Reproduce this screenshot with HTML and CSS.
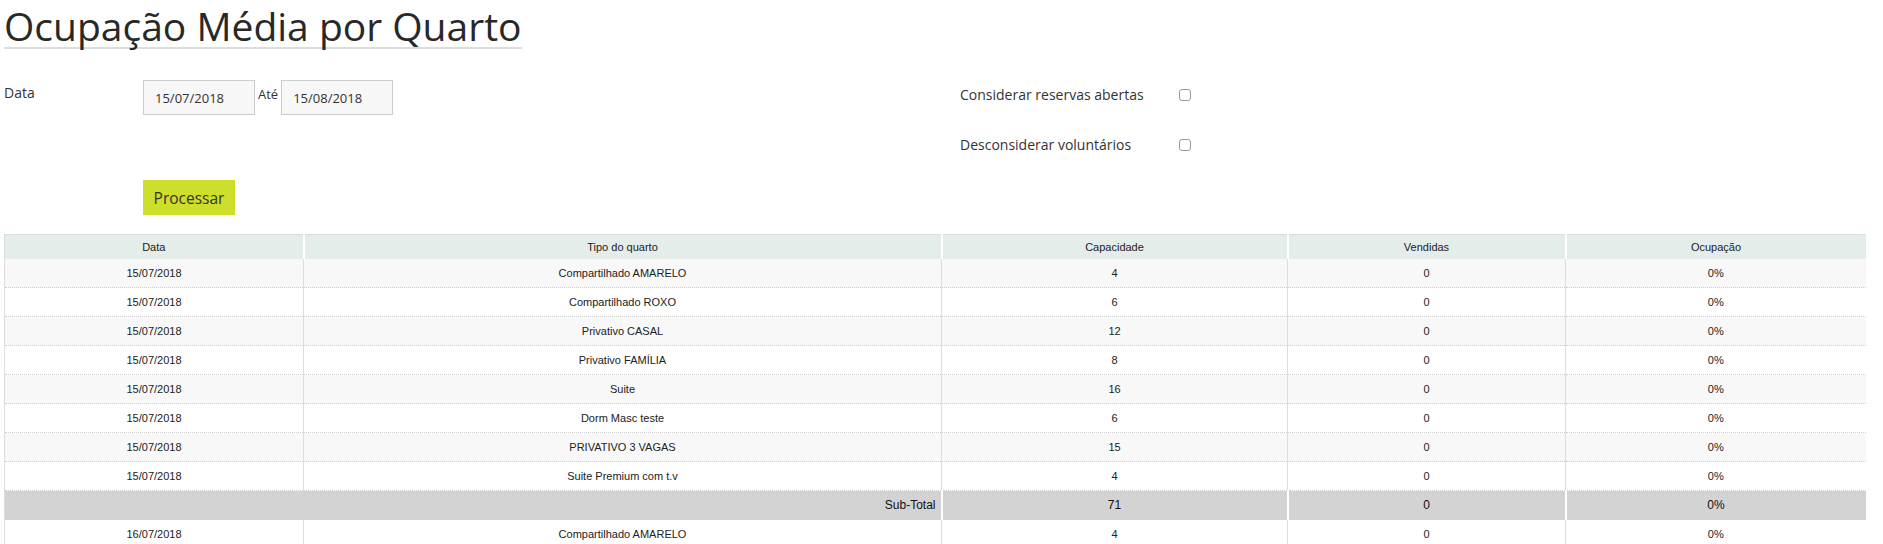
FILE: index.html
```html
<!DOCTYPE html>
<html lang="pt">
<head>
<meta charset="utf-8">
<title>Ocupação Média por Quarto</title>
<link rel="stylesheet" href="styles.css">
</head>
<body>
<div class="page">
  <h1 class="title">Ocupação Média por Quarto</h1>

  <form class="filters">
    <div class="filters-left">
      <div class="date-row">
        <label class="field-label">Data</label>
        <input class="date-input" type="text" value="15/07/2018">
        <span class="ate">Até</span>
        <input class="date-input" type="text" value="15/08/2018">
      </div>
      <div class="action-row">
        <button type="button" class="btn-process">Processar</button>
      </div>
    </div>
    <div class="filters-right">
      <div class="check-row">
        <label class="check-label">Considerar reservas abertas</label>
        <input class="check" type="checkbox">
      </div>
      <div class="check-row">
        <label class="check-label">Desconsiderar voluntários</label>
        <input class="check" type="checkbox">
      </div>
    </div>
  </form>

  <table class="report">
    <colgroup>
      <col class="c-data">
      <col class="c-tipo">
      <col class="c-cap">
      <col class="c-vend">
      <col class="c-ocup">
    </colgroup>
    <thead>
      <tr>
        <th>Data</th>
        <th>Tipo do quarto</th>
        <th>Capacidade</th>
        <th>Vendidas</th>
        <th>Ocupação</th>
      </tr>
    </thead>
    <tbody>
      <tr><td>15/07/2018</td><td>Compartilhado AMARELO</td><td>4</td><td>0</td><td>0%</td></tr>
      <tr><td>15/07/2018</td><td>Compartilhado ROXO</td><td>6</td><td>0</td><td>0%</td></tr>
      <tr><td>15/07/2018</td><td>Privativo CASAL</td><td>12</td><td>0</td><td>0%</td></tr>
      <tr><td>15/07/2018</td><td>Privativo FAMÍLIA</td><td>8</td><td>0</td><td>0%</td></tr>
      <tr><td>15/07/2018</td><td>Suite</td><td>16</td><td>0</td><td>0%</td></tr>
      <tr><td>15/07/2018</td><td>Dorm Masc teste</td><td>6</td><td>0</td><td>0%</td></tr>
      <tr><td>15/07/2018</td><td>PRIVATIVO 3 VAGAS</td><td>15</td><td>0</td><td>0%</td></tr>
      <tr><td>15/07/2018</td><td>Suite Premium com t.v</td><td>4</td><td>0</td><td>0%</td></tr>
      <tr class="subtotal"><td colspan="2" class="sub-label">Sub-Total</td><td>71</td><td>0</td><td>0%</td></tr>
      <tr><td>16/07/2018</td><td>Compartilhado AMARELO</td><td>4</td><td>0</td><td>0%</td></tr>
    </tbody>
  </table>
</div>
</body>
</html>
```

FILE: styles.css
```css
html, body {
  margin: 0;
  padding: 0;
  background: #fff;
}

body {
  font-family: "Open Sans", "Liberation Sans", sans-serif;
  color: #333;
}

.page {
  padding: 5px 18px 0 4px;
}

.title {
  display: inline-block;
  margin: 0;
  font-size: 39px;
  font-weight: 400;
  line-height: 42px;
  color: #282828;
  border-bottom: 2px solid #ddd;
}

.filters {
  display: flex;
  margin-top: 31px;
}

.filters-left {
  width: 956px;
}

.date-row {
  display: flex;
  align-items: flex-start;
}

.field-label {
  width: 139px;
  font-size: 14px;
  line-height: 18px;
  padding-top: 4px;
}

.date-input {
  box-sizing: border-box;
  width: 112px;
  height: 35px;
  margin: 0;
  padding: 0 0 0 11px;
  border: 1px solid #ccc;
  background: #f7f7f7;
  font-family: "Open Sans", sans-serif;
  font-size: 13px;
  color: #333;
  outline: none;
}

.ate {
  font-size: 13px;
  line-height: 18px;
  padding-top: 5px;
  margin: 0 3px 0 3px;
}

.action-row {
  margin-top: 65px;
  padding-left: 139px;
}

.btn-process {
  box-sizing: border-box;
  width: 92px;
  height: 35px;
  border: none;
  background: #cddf2a;
  color: #333;
  font-family: "Open Sans", sans-serif;
  font-size: 15.5px;
  padding: 0;
  cursor: pointer;
}

.filters-right {
  display: flex;
  flex-direction: column;
}

.check-row {
  display: flex;
  align-items: center;
  height: 50px;
  margin-top: -11px;
}

.check-row + .check-row {
  margin-top: 0;
}

.check-label {
  width: 219px;
  font-size: 14px;
}

.check {
  appearance: none;
  -webkit-appearance: none;
  box-sizing: border-box;
  width: 12px;
  height: 12px;
  margin: 2px 0 0 0;
  border: 1px solid #9a9a9a;
  border-radius: 3px;
  background: #fff;
}

.report {
  margin-top: 19px;
  width: 1861px;
  border-collapse: collapse;
  table-layout: fixed;
  font-family: "Liberation Sans", Arial, sans-serif;
  font-size: 11px;
  color: #222;
}

.c-data { width: 299px; }
.c-tipo { width: 638px; }
.c-cap { width: 346px; }
.c-vend { width: 278px; }
.c-ocup { width: 300px; }

.report th {
  height: 24px;
  padding: 0;
  background: #e5edeb;
  font-weight: 400;
  color: #222;
  border-top: 1px solid #dcdcdc;
  border-left: 2px solid #fff;
  text-align: center;
}

.report th:first-child {
  border-left: 1px solid #dcdcdc;
}

.report td {
  height: 28px;
  padding: 0;
  text-align: center;
  border-left: 1px solid #ddd;
  border-bottom: 1px dotted #cfcfcf;
}

.report tbody tr:nth-child(odd) td {
  background: #f8f8f8;
}

.report tbody tr:nth-child(even) td {
  background: #fff;
}

.report tbody tr.subtotal td {
  background: #d3d3d3;
  border-left: 2px solid #fff;
  color: #111;
  font-size: 12px;
}

.report tbody tr.subtotal td:first-child {
  border-left: 1px solid #ddd;
}

.report td.sub-label {
  text-align: right;
  padding-right: 5px;
}
```
